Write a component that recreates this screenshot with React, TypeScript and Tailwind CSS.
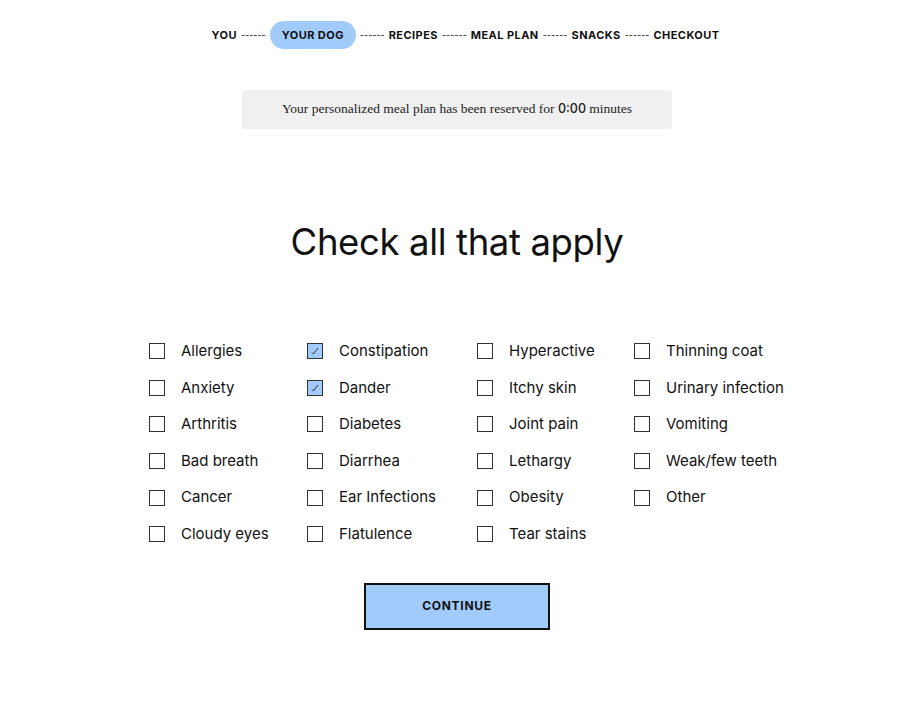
import { useState } from 'react'

const STEPS = ['You', 'Your Dog', 'Recipes', 'Meal Plan', 'Snacks', 'Checkout']

const COLUMNS: string[][] = [
  ['Allergies', 'Anxiety', 'Arthritis', 'Bad breath', 'Cancer', 'Cloudy eyes'],
  ['Constipation', 'Dander', 'Diabetes', 'Diarrhea', 'Ear Infections', 'Flatulence'],
  ['Hyperactive', 'Itchy skin', 'Joint pain', 'Lethargy', 'Obesity', 'Tear stains'],
  ['Thinning coat', 'Urinary infection', 'Vomiting', 'Weak/few teeth', 'Other'],
]

function StepNav() {
  return (
    <nav className="flex items-center justify-center pl-[31px] pt-[21px] font-['Inter',sans-serif] text-[11px] font-bold uppercase tracking-[0.04em] text-[#111]">
      {STEPS.map((step, i) => (
        <div key={step} className="flex items-center">
          {i > 0 ? <span className="px-[4px] text-[9px] font-normal tracking-[0]">------</span> : null}
          <span
            className={
              i === 1
                ? 'flex h-[28px] items-center rounded-full bg-[#a1cbfb] px-[12px]'
                : 'flex h-[28px] items-center'
            }
          >
            {step}
          </span>
        </div>
      ))}
    </nav>
  )
}

interface SymptomProps {
  label: string
  checked: boolean
  onToggle: () => void
}

function Symptom({ label, checked, onToggle }: SymptomProps) {
  return (
    <button type="button" onClick={onToggle} className="flex h-[36.6px] items-center gap-[16px] text-left">
      <span
        className={
          checked
            ? 'flex h-[16px] w-[16px] shrink-0 items-center justify-center border border-[#333] bg-[#a1cbfb]'
            : 'flex h-[16px] w-[16px] shrink-0 items-center justify-center border border-[#333] bg-white'
        }
      >
        {checked ? (
          <svg width="8" height="8" viewBox="0 0 8 8" fill="none">
            <path d="M1 5.5 L2.3 7 L7 1" stroke="#222" strokeWidth="0.9" />
          </svg>
        ) : null}
      </span>
      <span className="whitespace-nowrap font-['Inter',sans-serif] text-[15px] text-[#111]">{label}</span>
    </button>
  )
}

export default function App() {
  const [selected, setSelected] = useState<string[]>(['Constipation', 'Dander'])

  const toggle = (label: string) =>
    setSelected((s) => (s.includes(label) ? s.filter((x) => x !== label) : [...s, label]))

  return (
    <div className="min-h-[705px] w-[900px] bg-white">
      <StepNav />

      <div className="pl-[14px]">
        <div className="mt-[41px] flex justify-center">
          <div className="flex h-[39px] w-[430px] items-center justify-center rounded-[3px] bg-[#f0f0f0] font-['Liberation_Serif',serif] text-[13.5px] text-[#222]">
            Your personalized meal plan has been reserved for&nbsp;
            <span className="font-['Inter',sans-serif] text-[12.5px] font-medium">0:00</span>&nbsp;minutes
          </div>
        </div>

        <h1 className="mt-[89px] text-center font-['Inter',sans-serif] text-[36.5px] leading-[48px] tracking-[-0.01em] text-[#111]">
          Check all that apply
        </h1>

        <div className="mt-[67px] grid grid-cols-[158px_170px_157px_auto] pl-[135px]">
          {COLUMNS.map((col, ci) => (
            <div key={ci} className="flex flex-col">
              {col.map((label) => (
                <Symptom key={label} label={label} checked={selected.includes(label)} onToggle={() => toggle(label)} />
              ))}
            </div>
          ))}
        </div>

        <div className="mt-[30px] flex justify-center">
          <button
            type="button"
            className="h-[47px] w-[186px] border-2 border-[#111] bg-[#a1cbfb] font-['Inter',sans-serif] text-[12px] font-bold uppercase tracking-[0.06em] text-[#111]"
          >
            Continue
          </button>
        </div>
      </div>
    </div>
  )
}
